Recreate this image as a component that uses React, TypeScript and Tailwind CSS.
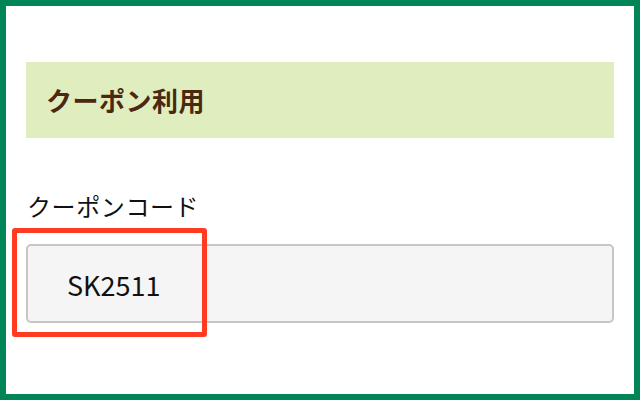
import React from 'react';

const App: React.FC = () => {
  return (
    <div
      className="w-[640px] h-[400px] bg-white border-[6px] border-[#008656] px-[20px] pt-[56px] box-border"
      style={{ fontFamily: '"Noto Sans CJK JP", "Noto Sans", sans-serif' }}
    >
      <div className="h-[76px] bg-[#e0edbf] flex items-center pl-[20px]">
        <h2 className="text-[26px] font-bold text-[#4a2812] leading-none tracking-[0.5px]">クーポン利用</h2>
      </div>

      <div className="mt-[53px]">
        <label className="block text-[24px] leading-[30px] text-[#111] pl-[1px] tracking-[0.6px]">クーポンコード</label>
        <div className="relative mt-[23px]">
          <div className="h-[79px] rounded-[5px] border-2 border-[#c6c6c6] bg-[#f5f5f5] flex items-center pl-[39px]">
            <span className="text-[27px] text-[#111] leading-none mt-[1px]">SK2511</span>
          </div>
          {/* highlight */}
          <div className="absolute left-[-14px] top-[-16px] w-[195px] h-[109px] border-[5px] border-[#ff3b22] rounded-[3px] pointer-events-none" />
        </div>
      </div>
    </div>
  );
};

export default App;
